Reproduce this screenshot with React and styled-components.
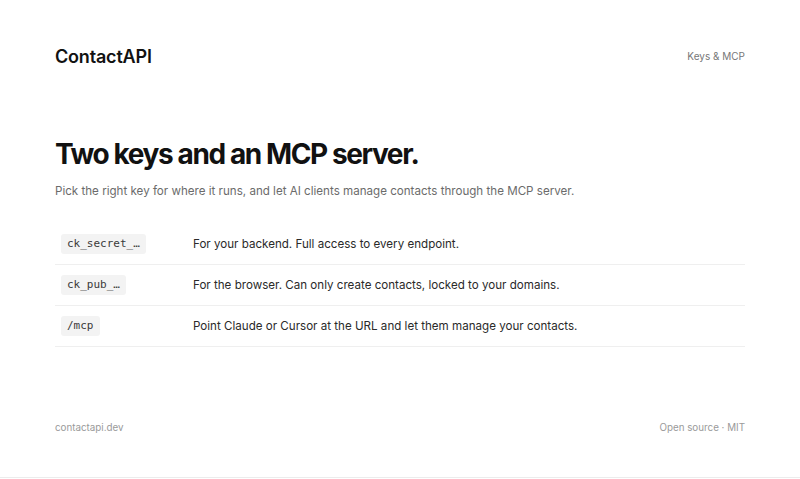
import React from 'react';
import styled, { createGlobalStyle } from 'styled-components';

const GlobalStyle = createGlobalStyle`
  html, body {
    margin: 0;
    padding: 0;
    background: #ffffff;
  }
  body {
    font-family: Inter, "Noto Sans", "Liberation Sans", sans-serif;
    color: #111;
    -webkit-font-smoothing: antialiased;
  }
`

const Page = styled.div`
  border-bottom: 1px solid #ececec;
  height: 478px;
  display: flex;
  flex-direction: column;
  box-sizing: border-box;
`

const Shell = styled.div`
  width: 690px;
  margin: 0 auto;
  flex: 1;
  display: flex;
  flex-direction: column;
`

const Header = styled.header`
  display: flex;
  align-items: center;
  justify-content: space-between;
  padding-top: 45px;
  height: 22px;
`

const Brand = styled.div`
  font-size: 18px;
  font-weight: 600;
  letter-spacing: -0.01em;
  color: #111;
`

const NavLink = styled.a`
  font-size: 10px;
  color: #777;
  text-decoration: none;
`

const Hero = styled.section`
  margin-top: 69px;
`

const Title = styled.h1`
  margin: 0;
  font-size: 28px;
  font-weight: 700;
  letter-spacing: -0.05em;
  line-height: 36px;
  color: #111;
`

const Lead = styled.p`
  margin: 10px 0 0;
  font-size: 11.6px;
  line-height: 18px;
  color: #6b6b6b;
`

const KeyTable = styled.div`
  margin-top: 24px;
  display: flex;
  flex-direction: column;
`

const KeyRow = styled.div`
  display: grid;
  grid-template-columns: 132px 1fr;
  align-items: center;
  padding: 10px 6px;
  border-bottom: 1px solid #efefef;
`

const Chip = styled.span`
  justify-self: start;
  font-family: "DejaVu Sans Mono", "Liberation Mono", monospace;
  font-size: 11px;
  line-height: 20px;
  padding: 0 6px;
  background: #f3f3f3;
  border-radius: 3px;
  color: #3a3a3a;
`

const Desc = styled.span`
  font-size: 11.6px;
  line-height: 20px;
  color: #2a2a2a;
`

const Footer = styled.footer`
  margin-top: auto;
  margin-bottom: 44px;
  display: flex;
  justify-content: space-between;
  font-size: 9.8px;
  color: #9a9a9a;
`

const keys = [
  { name: 'ck_secret_…', text: 'For your backend. Full access to every endpoint.' },
  { name: 'ck_pub_…', text: 'For the browser. Can only create contacts, locked to your domains.' },
  { name: '/mcp', text: 'Point Claude or Cursor at the URL and let them manage your contacts.' },
];

export default function App() {
  return (
    <>
      <GlobalStyle />
      <Page>
        <Shell>
          <Header>
            <Brand>ContactAPI</Brand>
            <NavLink href="#">Keys &amp; MCP</NavLink>
          </Header>
          <Hero>
            <Title>Two keys and an MCP server.</Title>
            <Lead>
              Pick the right key for where it runs, and let AI clients manage contacts through the MCP server.
            </Lead>
          </Hero>
          <KeyTable>
            {keys.map(k => (
              <KeyRow key={k.name}>
                <Chip>{k.name}</Chip>
                <Desc>{k.text}</Desc>
              </KeyRow>
            ))}
          </KeyTable>
          <Footer>
            <span>contactapi.dev</span>
            <span>Open source · MIT</span>
          </Footer>
        </Shell>
      </Page>
    </>
  );
}
